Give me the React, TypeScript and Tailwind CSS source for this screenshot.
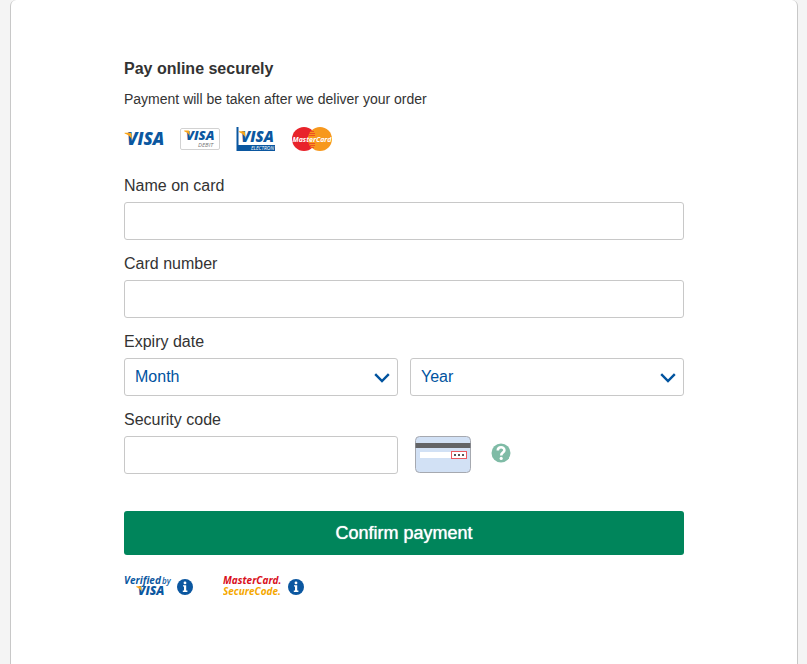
import React from 'react';

const italic = "'Open Sans', 'Noto Sans', sans-serif";

// Blue wordmark with the amber flick on the V
const VisaWord = ({ x, y, size }: { x: number; y: number; size: number }) => (
  <g transform={`translate(${x} ${y})`}>
    <text x="0" y="0" fontFamily={italic} fontSize={size} fontWeight="800" fontStyle="italic" fill="#0b57a0">
      VISA
    </text>
    <path
      d="M-2.4 -12.3 H3 Q4.4 -12.3 4.5 -11 L4.9 -5.6 Q2.8 -9.6 -2.4 -11.4 Z"
      transform={`scale(${size / 17})`}
      fill="#f9a51a"
    />
  </g>
);

const VisaLogo = () => (
  <svg width="40" height="26" viewBox="0 0 40 26" role="img" aria-label="Visa">
    <VisaWord x={3} y={18} size={17} />
  </svg>
);

const VisaDebitLogo = () => (
  <svg width="40" height="26" viewBox="0 0 40 26" role="img" aria-label="Visa Debit">
    <rect x="0.5" y="1.5" width="39" height="21" rx="1.5" fill="#fff" stroke="#d2d2d2" />
    <VisaWord x={6} y={13} size={13} />
    <text x="18" y="20" fontFamily={italic} fontSize="6" fontStyle="italic" fill="#777">
      DEBIT
    </text>
  </svg>
);

const VisaElectronLogo = () => (
  <svg width="40" height="26" viewBox="0 0 40 26" role="img" aria-label="Visa Electron">
    <path d="M0.5 0 H2.5 V18 H39 V24 H0.5 Z" fill="#0b57a0" />
    <VisaWord x={5} y={15} size={15} />
    <text x="15" y="23" fontFamily={italic} fontSize="5" fontStyle="italic" fill="#fff">
      ELECTRON
    </text>
  </svg>
);

const MasterCardLogo = () => (
  <svg width="40" height="26" viewBox="0 0 40 26" role="img" aria-label="MasterCard">
    <circle cx="12" cy="12" r="12" fill="#e8232b" />
    <circle cx="28" cy="12" r="12" fill="#f7981d" />
    <path
      d="M18 4.5 H22 M17 6.5 H23 M16.5 8.5 H23 M16.5 16.5 H23 M17 18.5 H23 M18 20.5 H22"
      stroke="#ee4f25"
      strokeWidth="1"
    />
    <text
      x="20"
      y="15"
      textAnchor="middle"
      fontFamily={italic}
      fontSize="7"
      fontWeight="700"
      fontStyle="italic"
      fill="#fff"
    >
      MasterCard
    </text>
  </svg>
);

const SecurityCodeCard = () => (
  <svg width="56" height="38" viewBox="0 0 56 38" role="img" aria-label="Last three digits on the back of your card">
    <rect x="0.5" y="0.5" width="55" height="36" rx="4" fill="#d2e1f5" stroke="#a6a9b0" />
    <rect x="0.5" y="7" width="55" height="5" fill="#636466" />
    <rect x="5" y="16" width="32" height="6" fill="#fff" />
    <rect x="36.5" y="15.5" width="15" height="7" fill="#fff" stroke="#ec5a60" />
    <path d="M39 18h2v2h-2z M43 18h2v2h-2z M47 18h2v2h-2z" fill="#555" />
  </svg>
);

const HelpIcon = () => (
  <svg width="20" height="20" viewBox="0 0 20 20" aria-hidden="true">
    <circle cx="10" cy="10" r="9.5" fill="#7fbba6" />
    <path
      d="M6.8 7.5 C6.8 3.2 13.4 3.4 13.4 7.2 C13.4 9.6 10.2 9.5 10.2 12.4"
      fill="none"
      stroke="#fff"
      strokeWidth="2.6"
    />
    <circle cx="10.2" cy="15.4" r="1.6" fill="#fff" />
  </svg>
);

const InfoIcon = () => (
  <svg width="16" height="16" viewBox="0 0 16 16" aria-hidden="true">
    <circle cx="8" cy="8" r="8" fill="#0b57a0" />
    <circle cx="8" cy="3.9" r="1.4" fill="#fff" />
    <path d="M6 6.3 H9.2 V11.6 H10.4 V13 H5.8 V11.6 H7 V7.6 H6 Z" fill="#fff" />
  </svg>
);

const VerifiedByVisaLogo = () => (
  <svg width="48" height="28" viewBox="0 0 48 28" role="img" aria-label="Verified by Visa">
    <text x="0" y="11" fontFamily={italic} fontSize="10" fontWeight="700" fontStyle="italic" fill="#0b57a0">
      Verified
    </text>
    <text x="38" y="11" fontFamily={italic} fontSize="8" fontWeight="600" fontStyle="italic" fill="#0b57a0">
      by
    </text>
    <VisaWord x={14} y={22} size={12} />
  </svg>
);

const SecureCodeLogo = () => (
  <svg width="60" height="28" viewBox="0 0 60 28" role="img" aria-label="MasterCard SecureCode">
    <text x="0" y="11" fontFamily={italic} fontSize="10" fontWeight="700" fontStyle="italic" fill="#d9101c">
      MasterCard.
    </text>
    <text x="0" y="22" fontFamily={italic} fontSize="10" fontWeight="700" fontStyle="italic" fill="#f5a800">
      SecureCode.
    </text>
  </svg>
);

interface TextFieldProps {
  id: string;
  label: string;
}

const inputClass =
  'block h-[38px] w-full rounded-[3px] border border-[#c8c8c8] bg-white px-[10px] text-base text-[#333]';

const TextField: React.FC<TextFieldProps> = ({ id, label }) => (
  <div className="mb-3">
    <label htmlFor={id} className="mb-1 block leading-6">
      {label}
    </label>
    <input id={id} type="text" className={inputClass} />
  </div>
);

interface SelectFieldProps {
  label: string;
  options: string[];
}

const SelectField: React.FC<SelectFieldProps> = ({ label, options }) => (
  <div className="relative">
    <select
      aria-label={label}
      className="block h-[38px] w-full appearance-none rounded-[3px] border border-[#c8c8c8] bg-white px-[10px] text-base text-[#00539f]"
    >
      <option>{label}</option>
      {options.map(option => (
        <option key={option}>{option}</option>
      ))}
    </select>
    <svg
      width="16"
      height="10"
      viewBox="0 0 16 10"
      className="pointer-events-none absolute top-[15px] right-2"
      aria-hidden="true"
    >
      <path d="M1.2 1.2 L8 8 L14.8 1.2" fill="none" stroke="#00539f" strokeWidth="2.4" />
    </svg>
  </div>
);

const months = ['01', '02', '03', '04', '05', '06', '07', '08', '09', '10', '11', '12'];
const years = ['2016', '2017', '2018', '2019', '2020', '2021'];

const App: React.FC = () => {
  return (
    <div className="min-h-screen bg-[#f4f4f4] pr-[9px] pl-[10px] font-['Liberation_Sans',Arial,sans-serif] text-base text-[#333]">
      <main className="min-h-screen rounded-t-md border-x border-[#c8c8c8] bg-white px-4 pt-[57px] pb-16">
        <form className="mx-auto max-w-[560px]" onSubmit={e => e.preventDefault()}>
          <h1 className="leading-6 font-bold">Pay online securely</h1>
          <p className="mt-2 text-sm">Payment will be taken after we deliver your order</p>

          <div className="mt-[18px] mb-[21px] flex gap-4">
            <VisaLogo />
            <VisaDebitLogo />
            <VisaElectronLogo />
            <MasterCardLogo />
          </div>

          <TextField id="card-name" label="Name on card" />
          <TextField id="card-number" label="Card number" />

          <fieldset className="mb-3">
            <legend className="mb-1 leading-6">Expiry date</legend>
            <div className="grid grid-cols-2 gap-3">
              <SelectField label="Month" options={months} />
              <SelectField label="Year" options={years} />
            </div>
          </fieldset>

          <label htmlFor="security-code" className="mb-1 block leading-6">
            Security code
          </label>
          <div className="grid grid-cols-2 gap-3">
            <input id="security-code" type="text" className={inputClass} />
            <div className="flex items-center gap-5 pl-[5px]">
              <SecurityCodeCard />
              <button type="button" aria-label="Security code help" className="-mt-1">
                <HelpIcon />
              </button>
            </div>
          </div>

          <button
            type="submit"
            className="mt-[37px] h-11 w-full rounded-[3px] bg-[#00855b] text-lg text-white [text-shadow:0_0_1px_#fff]"
          >
            Confirm payment
          </button>

          <div className="mt-[18px] flex items-center">
            <VerifiedByVisaLogo />
            <a href="#verified-by-visa" aria-label="About Verified by Visa" className="ml-[5px]">
              <InfoIcon />
            </a>
            <span className="ml-[30px]">
              <SecureCodeLogo />
            </span>
            <a href="#securecode" aria-label="About MasterCard SecureCode" className="ml-[5px]">
              <InfoIcon />
            </a>
          </div>
        </form>
      </main>
    </div>
  );
};

export default App;
